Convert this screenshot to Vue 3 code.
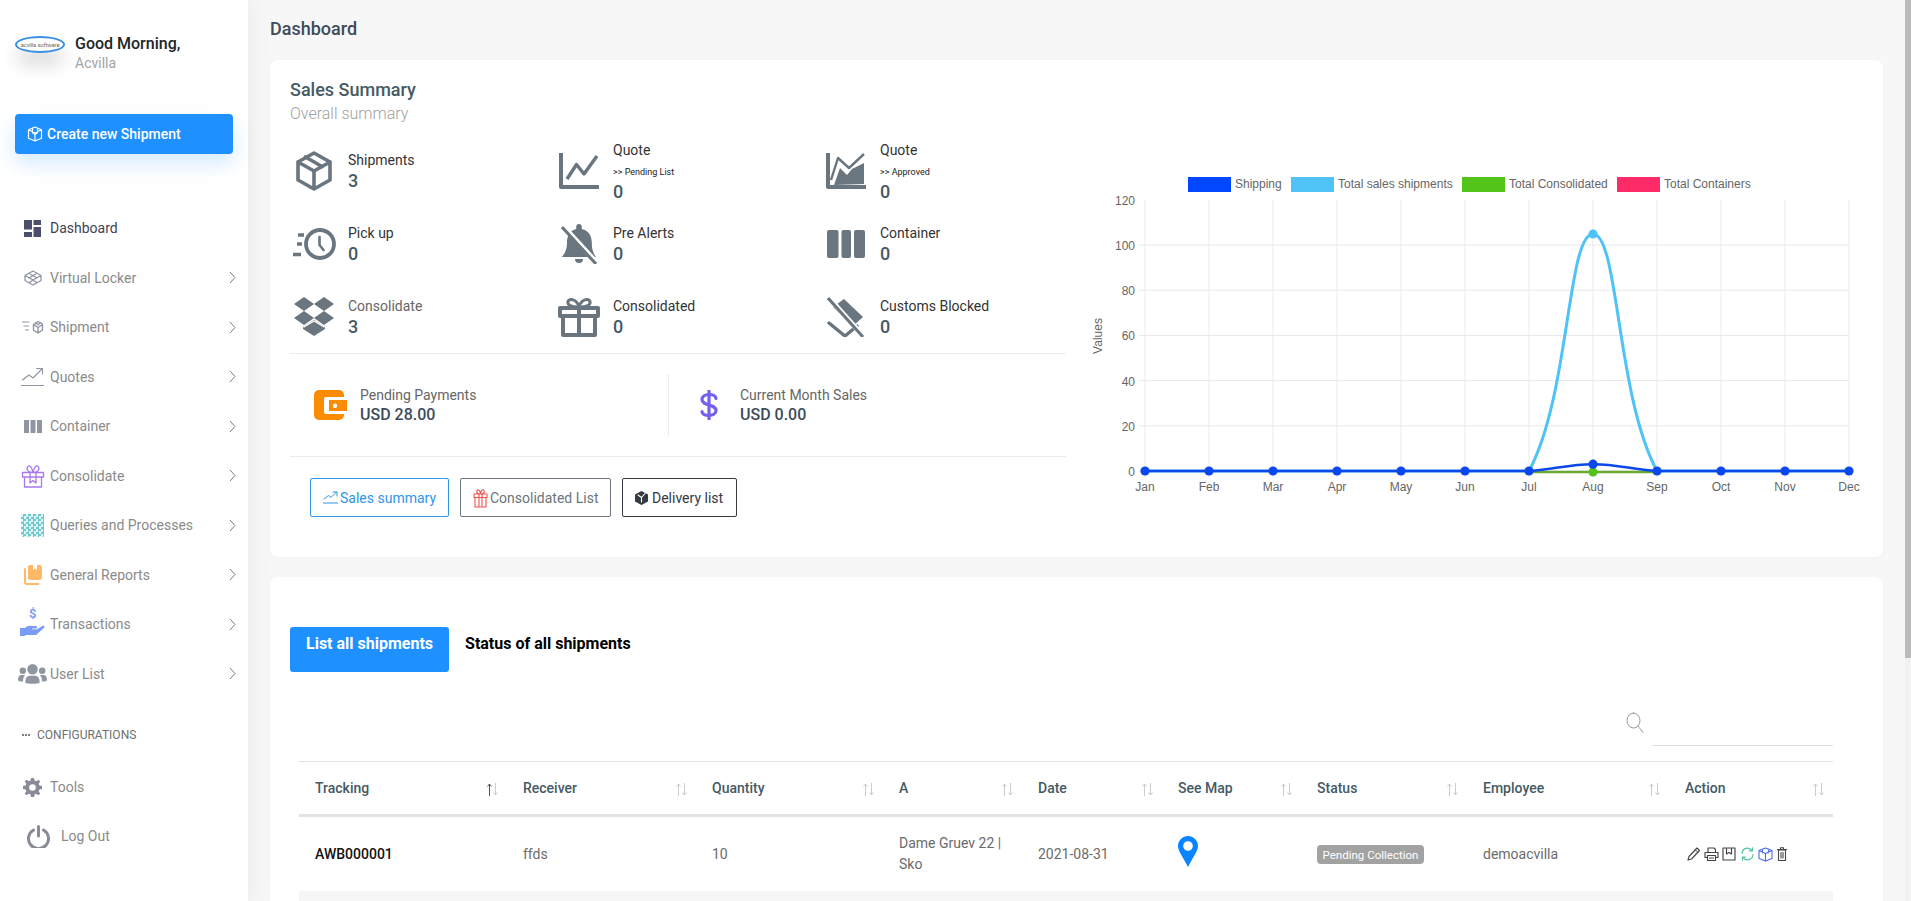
<script setup>
import { h } from 'vue'

const P = (d, m = 'f', w = 2, c = 'currentColor') =>
  m === 'f' ? { d, fill: c, stroke: 'none' }
            : { d, fill: 'none', stroke: c, 'stroke-width': w, 'stroke-linecap': m === 'b' ? 'butt' : 'round', 'stroke-linejoin': 'round' }

const ICONS = {
  /* sidebar */
  dash: [17, 17, [P('M0 0h8v9.5H0zM0 12h8v5H0zM9.5 0H17v5H9.5zM9.5 7H17v10H9.5z')]],
  locker: [18, 16, [P('M9 1 17 5.5V10.5L9 15 1 10.5V5.5ZM1 5.5 9 10 17 5.500M5 3.200 13 8M13 3.200 5 8M5 12.800 9 10 13 12.800', 's', 1.3)]],
  ship: [22, 14, [P('M12 4.500 16 1.500 20.500 4 20.500 10 16 13 11.500 10V4.500ZM11.500 4.500 16 7.500 20.500 4.500M16 7.500V13M13.500 2.800 16 4.800 18.500 2.800', 's', 1.4), P('M0 2h7M2 6h4.500M3.500 10h3', 's', 1.2)]],
  trend: [23, 20, [P('M1.500 13 8 8 12 11 21 2M15.500 1.500H21.500V7', 's', 1.1), P('M0 18.500H23', 's', 1)]],
  bars: [18, 13, [P('M0 0h5v13H0zM6.500 0h5v13h-5zM13 0h5v13h-5z')]],
  giftO: [24, 24, [P('M1.500 8.500H22.500V13H1.500ZM3.500 13V23H20.500V13M9 8.500V19L12 16.500 15 19V8.500M12 8.500C8 8.500 5 6 6.500 3 8 0.500 11 2.500 12 8.500 13 2.500 16 0.500 17.500 3 19 6 16 8.500 12 8.500Z', 's', 1.3)]],
  book: [18, 20, [P('M4 1.500a2.500 2.500 0 0 1 2.500-1.500H9v5l2-1.500L13 5V0h2.500A2.500 2.500 0 0 1 18 2.500v10a2.500 2.500 0 0 1-2.500 2.500H6.500A2.500 2.500 0 0 1 4 12.500Z'), P('M1 4v13a2 2 0 0 0 2 2h11.500', 's', 2)]],
  hand: [25, 23, [P('M0 15h5c2-2 4-2.500 7-2h4c1.500 0 1.500 2.500 0 2.500h-4v.8h5l5.500-3.300c1.500-.7 2.700.8 1.600 1.800L16 22H6l-1.500 1H0Z')]],
  users: [29, 20, [P('M14.500 0a5 5 0 1 1 0 10.500 5 5 0 0 1 0-10.500ZM4.800 3.500a3 3 0 1 1 0 6.500 3 3 0 0 1 0-6.500ZM24.200 3.500a3 3 0 1 1 0 6.500 3 3 0 0 1 0-6.500ZM7.500 19c-.500-3.500.800-7 4.200-7.200h5.600c3.400.2 4.700 3.700 4.200 7.200-2 1-12 1-14 0ZM0 16c0-3 1.200-5 3.500-5h2.700c.7 0 .8.500.2 1-1 1.200-1.200 2.500-1.300 5.500C2.500 17.500 0 17 0 16ZM29 16c0-3-1.200-5-3.500-5h-2.700c-.7 0-.8.500-.2 1 1 1.200 1.200 2.500 1.300 5.500 2.600 0 5.100-.5 5.100-1.500Z')]],
  gear: [19, 19, [P('M8 0h3l.5 2.600 1.700.7L15.400 1.800 17.200 3.600 15.700 5.800l.7 1.700L19 8v3l-2.600.5-.7 1.700 1.500 2.200-1.800 1.800-2.200-1.500-1.700.7L11 19H8l-.5-2.600-1.700-.7-2.200 1.500L1.800 15.400 3.300 13.200 2.600 11.500 0 11V8l2.600-.5.7-1.700L1.800 3.600 3.600 1.800 5.800 3.300l1.700-.7ZM9.500 6.200a3.300 3.300 0 1 0 0 6.600 3.300 3.300 0 0 0 0-6.600Z')]],
  power: [23, 23, [P('M6.500 5A10 10 0 1 0 16.500 5', 's', 3), P('M11.500 1.500V11', 's', 3)]],
  cube: [16, 16, [P('M8 1 14.500 3.800V12.200L8 15 1.500 12.200V3.800ZM1.500 3.800 8 6.800 14.500 3.800M5.500 2V6.800L8 8.500 10.500 6.800V2M8 8.500V15', 's', 1.2)]],
  /* stats */
  box: [36, 40, [P('M18 2 34 11V29L18 38 2 29V11ZM2 11 18 20 34 11M18 20V38', 's', 3.600), P('M9.500 6 26 15.500', 's', 3.600)]],
  line: [40, 36, [P('M2 0V34H40', 'b', 4), P('M8 26 17.500 11.500 25 21 38 3', 'b', 3.400)]],
  area: [40, 36, [P('M2 0V34H40', 'b', 4), P('M8 32 14 15 21 22 26 16 38 10V31Z'), P('M5 27 12 5 23 15 38 1', 'b', 2.400)]],
  clock: [43, 32, [P('M27 2a14 14 0 1 1 0 28 14 14 0 0 1 0-28', 's', 3.800), P('M26.500 9V17L30.500 22', 's', 2.600), P('M5 7H11M4 16H9M0 26.500H8', 'b', 3.600)]],
  bell: [36, 40, [P('M18 0c1.800 0 2.800 1.300 2.800 2.900V5c6.500 1.300 10 6.600 10 13.500 0 9 2.400 11.500 4.200 14.500H1c1.800-3 5-5.500 5-14.500C6 11.600 9.200 6.300 15.200 5V2.900C15.200 1.300 16.200 0 18 0ZM14 35h8a4 4 0 0 1-8 0Z'), P('M2 2 36 39', 'b', 5, '#fff'), P('M1 3 35 40', 'b', 3)]],
  cols: [38, 28, [P('M2 0h7.500a2 2 0 0 1 2 2v24a2 2 0 0 1-2 2H2a2 2 0 0 1-2-2V2a2 2 0 0 1 2-2ZM16.500 0H22a2 2 0 0 1 2 2v24a2 2 0 0 1-2 2h-5.500a2 2 0 0 1-2-2V2a2 2 0 0 1 2-2ZM29 0h7a2 2 0 0 1 2 2v24a2 2 0 0 1-2 2h-7a2 2 0 0 1-2-2V2a2 2 0 0 1 2-2Z')]],
  drop: [42, 39, [P('M11 0 21 7 11 14 1 7ZM31 0 41 7 31 14 21 7ZM11 14 21 21 11 28 1 21ZM31 14 41 21 31 28 21 21ZM10 30 21 23 32 30V32L21 39 10 32Z'), P('M11 30 21 24 31 30', 's', 1.200, '#fff')]],
  gift: [44, 40, [P('M3 11H41V19H3ZM6 19V38H38V19M22 11V38', 's', 4), P('M22 10C14 10 10 8 11 4.500 12 1 20 2 22 10 24 2 32 1 33 4.500 34 8 30 10 22 10Z', 's', 3)]],
  block: [38, 40, [P('M17 2 36 20 26 29 6 10Z'), P('M2 26 18 39 30 29', 's', 3.400), P('M2 1 38 41', 'b', 5, '#fff'), P('M1 1 36 40', 'b', 3)]],
  wallet: [33, 30, [P('M5 0h20a5 5 0 0 1 5 5v20a5 5 0 0 1-5 5H5a5 5 0 0 1-5-5V5a5 5 0 0 1 5-5Z'), P('M12 7H33V24H12a2 2 0 0 1-2-2V9a2 2 0 0 1 2-2Z', 'f', 0, '#fff'), P('M15 10H33V21H15Z'), P('M21 13.500a2.200 2.200 0 1 1 0 4.400 2.200 2.200 0 0 1 0-4.400Z', 'f', 0, '#fff')]],
  dollar: [18, 30, [P('M9 1V29', 's', 3.200), P('M16 8.500C16 3 2 3 2 9.500 2 16 16 14 16 20.500 16 27 2 27 2 21.500', 's', 3.200)]],
  /* small */
  sTrend: [15, 13, [P('M1 8 5.500 4.500 8 6.500 13.500 1M10 1H14V5', 's', 1), P('M0 12H15', 's', 1)]],
  sGift: [15, 20, [P('M1 6H14V9.500H1ZM2 9.500V19H13V9.500M6 6V19M9 6V19M7.500 6C4.500 6 3 4.500 4 2.500 5 1 7 2 7.500 6 8 2 10 1 11 2.500 12 4.500 10.500 6 7.500 6Z', 's', 1.100)]],
  sBox: [13, 14, [P('M6.500 0 13 3.500V10.500L6.500 14 0 10.500V3.500Z'), P('M3 4 6.500 6.500 10 2.500M6.500 6.500V11', 's', 1.100, '#fff')]],
  pencil: [13, 14, [P('M10 1 12.500 3.500 4.500 12 1 13 2 9.500Z', 's', 1.100), P('M8.500 3 11 5.500', 's', 1)]],
  printer: [15, 14, [P('M4 5V1H10L11.500 2.500V5M1 5.500H14V10.500H11.500M3.500 10.500H1V5.500M3.500 8.500H11.500V13.500H3.500ZM5.500 11H9.500', 's', 1.150)]],
  save: [14, 14, [P('M1 1H13V13H1ZM4.500 1V7L7 5.500 9.500 7V1', 's', 1.150)]],
  sync: [15, 14, [P('M2 6.500A5.500 5.500 0 0 1 12 3.500M13 7.500A5.500 5.500 0 0 1 3 10.500M12.500 .8V3.800H9.500M2.500 13.200V10.200H5.500', 's', 1.200)]],
  bluebox: [15, 15, [P('M7.500 1 14 3.500V11.500L7.500 14 1 11.500V3.500ZM1 3.500 7.500 6.500 14 3.500M7.500 6.500V14M4.500 2V6M10.500 2V6', 's', 1.100)]],
  trash: [10, 14, [P('M1.500 3H8.500V13.500H1.500ZM0 2.500H10M3.500 2.500V.7H6.500V2.500', 's', 1.100), P('M4 5.500V11M6 5.500V11', 's', 1.100)]],
  search: [18, 21, [P('M7.500 1a6.500 7.500 0 1 1 0 15 6.500 7.500 0 0 1 0-15ZM12 14 17 20.500', 's', 1)]],
  pin: [20, 31, [P('M10 0C4.500 0 0 4.500 0 10c0 5 5 11 10 21 5-10 10-16 10-21C20 4.500 15.500 0 10 0Zm0 5.200a4.800 4.800 0 1 1 0 9.600 4.800 4.800 0 0 1 0-9.600Z')]]
}

const Ico = (props) => {
  const [w, h2, paths] = ICONS[props.n]
  return h('svg', { width: w, height: h2, viewBox: `0 0 ${w} ${h2}` }, paths.map((p) => h('path', p)))
}
Ico.props = ['n']

const menu = [
  { label: 'Dashboard', icon: 'dash', tone: 'm-dash', active: true },
  { label: 'Virtual Locker', icon: 'locker', tone: 'm-gray', arrow: true },
  { label: 'Shipment', icon: 'ship', tone: 'm-gray', arrow: true },
  { label: 'Quotes', icon: 'trend', tone: 'm-gray', arrow: true },
  { label: 'Container', icon: 'bars', tone: 'm-gray', arrow: true },
  { label: 'Consolidate', icon: 'giftO', tone: 'm-purple', arrow: true },
  { label: 'Queries and Processes', icon: null, tone: 'm-gray', arrow: true },
  { label: 'General Reports', icon: 'book', tone: 'm-orange', arrow: true },
  { label: 'Transactions', icon: 'hand', tone: 'm-blue', arrow: true, dollar: true },
  { label: 'User List', icon: 'users', tone: 'm-gray', arrow: true }
]

const stats = [
  { label: 'Shipments', value: 3, icon: 'box' },
  { label: 'Quote', sub: '>> Pending List', value: 0, icon: 'line' },
  { label: 'Quote', sub: '>> Approved', value: 0, icon: 'area' },
  { label: 'Pick up', value: 0, icon: 'clock' },
  { label: 'Pre Alerts', value: 0, icon: 'bell' },
  { label: 'Container', value: 0, icon: 'cols' },
  { label: 'Consolidate', value: 3, icon: 'drop', soft: true },
  { label: 'Consolidated', value: 0, icon: 'gift' },
  { label: 'Customs Blocked', value: 0, icon: 'block' }
]

const cols = [
  { t: 'Tracking', on: true }, { t: 'Receiver' }, { t: 'Quantity' }, { t: 'A' }, { t: 'Date' },
  { t: 'See Map' }, { t: 'Status' }, { t: 'Employee' }, { t: 'Action' }
]
const actions = [
  { n: 'pencil', c: 'a-dark' }, { n: 'printer', c: 'a-dark' }, { n: 'save', c: 'a-dark' },
  { n: 'sync', c: 'a-green' }, { n: 'bluebox', c: 'a-blue' }, { n: 'trash', c: 'a-dark' }
]

const months = ['Jan', 'Feb', 'Mar', 'Apr', 'May', 'Jun', 'Jul', 'Aug', 'Sep', 'Oct', 'Nov', 'Dec']
const X0 = 1145, DX = 64, Y0 = 471, DY = 2.26
const px = (i) => X0 + i * DX
const py = (v) => Y0 - v * DY
const ticks = [0, 20, 40, 60, 80, 100, 120]
const monthPts = months.map((m, i) => ({ m, x: px(i) }))
const legend = [
  { t: 'Shipping', x: 1188, c: '#0047ff' },
  { t: 'Total sales shipments', x: 1291, c: '#4fc3f7' },
  { t: 'Total Consolidated', x: 1462, c: '#52c41a' },
  { t: 'Total Containers', x: 1617, c: '#ff2a68' }
]
const lightPath = `M${X0} ${Y0}H1529C1569.600 396 1567.400 234 1593 234C1618.600 234 1616.400 396 1657 ${Y0}H${px(11)}`
const darkPath = `M${X0} ${Y0}H1529C1554.600 469.600 1567.400 464.200 1593 464.200C1618.600 464.200 1631.400 469.600 1657 ${Y0}H${px(11)}`
</script>

<template>
  <div class="app">
    <aside class="side">
      <div class="user">
        <div class="logo"><span class="logo-txt">acvilla software</span></div>
        <div>
          <div class="hello">Good Morning,</div>
          <div class="uname">Acvilla</div>
        </div>
      </div>
      <button class="create"><Ico n="cube" />Create new Shipment</button>

      <nav class="nav">
        <a v-for="m in menu" :key="m.label" class="item" :class="{ active: m.active }">
          <span class="slot" :class="m.tone">
            <span v-if="!m.icon" class="checker"></span>
            <Ico v-else :n="m.icon" />
            <span v-if="m.dollar" class="hand-dollar">$</span>
          </span>
          <span class="label">{{ m.label }}</span>
          <svg v-if="m.arrow" class="chev" width="7" height="13" viewBox="0 0 7 13">
            <path d="M1 1l5 5.500-5 5.500" fill="none" stroke="#7a7a7a" stroke-width="1" />
          </svg>
        </a>
      </nav>

      <div class="cfg"><span class="dots"><i></i><i></i><i></i></span>CONFIGURATIONS</div>
      <a class="item tools"><span class="slot m-tool"><Ico n="gear" /></span><span class="label">Tools</span></a>
      <a class="item logout"><span class="slot m-tool"><Ico n="power" /></span><span class="label">Log Out</span></a>
    </aside>

    <main class="main">
      <h1 class="page">Dashboard</h1>

      <section class="card summary">
        <div class="sum-left">
          <h2 class="title">Sales Summary</h2>
          <div class="subtitle">Overall summary</div>

          <div class="stats">
            <div v-for="s in stats" :key="s.label + s.icon" class="stat">
              <span class="stat-ico"><Ico :n="s.icon" /></span>
              <div>
                <div class="stat-label" :class="{ soft: s.soft }">{{ s.label }}</div>
                <div v-if="s.sub" class="stat-sub">{{ s.sub }}</div>
                <div class="stat-val">{{ s.value }}</div>
              </div>
            </div>
          </div>

          <div class="pays">
            <div class="pay pay-a">
              <span class="wallet"><Ico n="wallet" /></span>
              <div><div class="pay-label">Pending Payments</div><div class="pay-val">USD 28.00</div></div>
            </div>
            <div class="pay pay-b">
              <span class="dollar"><Ico n="dollar" /></span>
              <div><div class="pay-label">Current Month Sales</div><div class="pay-val">USD 0.00</div></div>
            </div>
          </div>

          <div class="btns">
            <button class="btn b-blue"><Ico n="sTrend" />Sales summary</button>
            <button class="btn b-gray"><span class="red"><Ico n="sGift" /></span>Consolidated List</button>
            <button class="btn b-dark"><Ico n="sBox" />Delivery list</button>
          </div>
        </div>

        <svg class="chart" width="790" height="330" viewBox="1080 165 790 330">
          <g v-for="l in legend" :key="l.t">
            <rect :x="l.x" y="177" width="43" height="15" :fill="l.c" />
            <text :x="l.x + 47" y="188" class="ctext">{{ l.t }}</text>
          </g>
          <line v-for="m in monthPts" :key="'v' + m.m" :x1="m.x" :x2="m.x" y1="200" y2="478" stroke="#ebebeb" />
          <g v-for="t in ticks" :key="t">
            <line v-if="t < 120" :x1="X0 - 6" :x2="1849" :y1="py(t)" :y2="py(t)" stroke="#e8e8e8" />
            <text x="1135" :y="py(t) + 5" text-anchor="end" class="ctext">{{ t }}</text>
          </g>
          <text v-for="m in monthPts" :key="'l' + m.m" :x="m.x" y="491" text-anchor="middle" class="ctext">{{ m.m }}</text>
          <text transform="translate(1102 336) rotate(-90)" text-anchor="middle" class="ctext">Values</text>

          <path :d="lightPath" fill="none" stroke="#4fc3f7" stroke-width="3" />
          <path d="M1529 472H1657" fill="none" stroke="#6aa832" stroke-width="2.500" />
          <path :d="darkPath" fill="none" stroke="#0a48ea" stroke-width="2.500" />
          <circle cx="1593" cy="234" r="4.500" fill="#4fc3f7" />
          <circle cx="1593" cy="472" r="4.500" fill="#52c41a" />
          <circle v-for="(m, i) in monthPts" :key="'d' + m.m" :cx="m.x" :cy="i === 7 ? 464.2 : Y0" r="4.600" fill="#0a48ea" />
        </svg>
      </section>

      <section class="card list">
        <div class="tabs">
          <button class="tab on">List all shipments</button>
          <button class="tab">Status of all shipments</button>
        </div>

        <div class="search">
          <span class="s-ico"><Ico n="search" /></span>
          <div class="s-line"></div>
        </div>

        <div class="tbl">
          <div class="row head">
            <div v-for="c in cols" :key="c.t" class="cell hcell">
              {{ c.t }}
              <svg class="sort" width="13" height="13" viewBox="0 0 13 13" fill="none">
                <path d="M3.500 13V1M1.500 3.500 3.500 1l2 2.500" :stroke="c.on ? '#555' : '#ccc'" />
                <path d="M9.500 0V12M7.500 9.500l2 2.500 2-2.500" stroke="#ccc" />
              </svg>
            </div>
          </div>
          <div class="row body">
            <div class="cell strong">AWB000001</div>
            <div class="cell">ffds</div>
            <div class="cell">10</div>
            <div class="cell">Dame Gruev 22 |<br />Sko</div>
            <div class="cell">2021-08-31</div>
            <div class="cell pin"><Ico n="pin" /></div>
            <div class="cell"><span class="badge">Pending Collection</span></div>
            <div class="cell">demoacvilla</div>
            <div class="cell acts">
              <span v-for="a in actions" :key="a.n" class="act" :class="a.c"><Ico :n="a.n" /></span>
            </div>
          </div>
          <div class="row stripe"></div>
        </div>
      </section>
    </main>

    <div class="scroll"><div class="thumb"></div></div>
  </div>
</template>

<style>
html, body { margin: 0; overflow: hidden; }
</style>

<style scoped>
* { box-sizing: border-box; }
.app {
  display: flex;
  width: 1911px;
  height: 901px;
  overflow: hidden;
  font-family: Roboto, "Liberation Sans", sans-serif;
  font-size: 14px;
  background: #f7f7f7;
}

/* sidebar */
.side {
  flex: 0 0 248px;
  background: #fff;
  padding-top: 36px;
  box-shadow: 0 0 24px rgba(0, 0, 0, .07);
  position: relative;
}
.user { display: flex; gap: 10px; padding-left: 15px; height: 78px; }
.logo {
  width: 50px; height: 17px;
  border: 2px solid #3a90e4;
  border-radius: 50%;
  box-shadow: 0 12px 18px rgba(0, 0, 0, .16);
  display: flex; align-items: center; justify-content: center;
  overflow: hidden;
  background: #fff;
}
.logo-txt { font-size: 6px; letter-spacing: -.2px; color: #77705f; white-space: nowrap; }
.hello { font-size: 16px; font-weight: 500; color: #212529; line-height: 16px; }
.uname { font-size: 14px; color: #a3a3a3; line-height: 16px; margin-top: 3px; }
.create {
  display: flex; align-items: center; gap: 4px;
  width: 218px; height: 40px;
  margin-left: 15px;
  padding: 0 0 0 12px;
  background: #1e90ff;
  color: #fff;
  border: 0; border-radius: 4px;
  font: 500 14px Roboto, sans-serif;
  box-shadow: 0 10px 20px rgba(30, 144, 255, .18);
}
.nav { margin-top: 49.600px; }
.item { display: flex; align-items: center; height: 49.500px; color: #8a8a8a; position: relative; }
.item.active { color: #3f4254; }
.slot { flex: 0 0 33px; margin-left: 16px; margin-right: 1px; display: flex; justify-content: center; align-items: center; position: relative; }
.label { flex: 1; }
.chev { margin-right: 12px; }
.m-dash { color: #4b4f6b; }
.m-gray { color: #9095a2; }
.m-purple { color: #a878f0; }
.m-orange { color: #ffb866; }
.m-blue { color: #7b9cf7; }
.m-tool { color: #888b96; }
.checker {
  width: 23px; height: 23px;
  background: repeating-conic-gradient(#6fc9cd 0 25%, #dff3f4 0 50%) 0 0 / 5px 5px;
}
.hand-dollar {
  position: absolute; left: 13px; top: -7px;
  font: 700 13px Roboto, sans-serif; color: #7b9cf7;
}
.cfg { margin-top: 24px; padding-left: 22px; height: 25px; display: flex; align-items: center; font-size: 12px; color: #6f6f6f; }
.dots { flex: 0 0 15px; display: flex; gap: 1px; }
.dots i { width: 2px; height: 2px; border-radius: 50%; background: #555; }
.tools { margin-top: 15px; height: 49px; }
.logout { height: 49px; }
.logout .slot { flex-basis: 34px; margin-left: 21px; margin-right: 6px; }

/* main */
.main { flex: 1; min-width: 0; padding: 0 22px; }
.page { margin: 0; height: 60px; line-height: 58px; font-size: 18px; font-weight: 500; color: #3e4b5b; }
.card {
  background: #fff;
  border-radius: 8px;
  box-shadow: 0 1px 6px rgba(0, 0, 0, .025);
}
.summary { display: flex; height: 497px; padding: 19px 0 0 20px; }
.sum-left { flex: 0 0 776px; }
.title { margin: 0; font-size: 18px; line-height: 22px; font-weight: 500; color: #455a64; }
.subtitle { margin-top: 2px; font-size: 16px; line-height: 22px; font-weight: 300; color: #a1a1a1; }
.stats {
  display: grid;
  grid-template-columns: 265px 267px 1fr;
  grid-auto-rows: 73px;
  margin-top: 9px;
  border-bottom: 1px solid #ebebeb;
  height: 220px;
}
.stat { display: flex; align-items: center; }
.stat-ico { flex: 0 0 58px; padding-right: 10px; display: flex; justify-content: center; color: #69757f; }
.stat-label { color: #333; line-height: 20px; }
.stat-label.soft { color: #666; }
.stat-sub { font-size: 9px; color: #222; line-height: 12px; margin-top: 6px; margin-bottom: 3px; }
.stat-val { font-size: 18px; font-weight: 500; color: #455a64; line-height: 21px; }
.pays { display: flex; height: 103px; align-items: center; border-bottom: 1px solid #ebebeb; }
.pay { display: flex; align-items: center; height: 62px; }
.pay-a { flex: 0 0 379px; padding-left: 24px; border-right: 1px solid #ebebeb; gap: 13px; }
.pay-b { padding-left: 31px; gap: 22px; }
.wallet { display: flex; color: #fb8c00; }
.dollar { display: flex; color: #7460ee; }
.pay-label { color: #666; line-height: 20px; }
.pay-val { font-size: 16px; font-weight: 500; color: #3e4b5b; line-height: 20px; }
.btns { display: flex; gap: 11px; padding: 21px 0 0 20px; }
.btn {
  display: flex; align-items: center; gap: 2px;
  height: 39px;
  padding: 0 0 0 12px;
  background: #fff;
  border: 1px solid;
  border-radius: 2px;
  font: 400 14px Roboto, sans-serif;
  white-space: nowrap;
}
.b-blue { width: 139px; color: #2f96e8; border-color: #2f96e8; }
.b-gray { width: 151px; color: #6c757d; border-color: #6c757d; }
.b-dark { width: 115px; gap: 4px; color: #343a40; border-color: #343a40; }
.red { display: flex; color: #ef5350; }
.chart { margin: 86px 0 0 14px; flex: none; }
.ctext { font: 12px "Liberation Sans", Arial, sans-serif; fill: #666; }

/* list */
.list { margin-top: 20px; padding: 50px 50px 0 20px; height: 340px; }
.tabs { display: flex; }
.tab {
  height: 45px;
  padding: 8px 16px 19px;
  background: none;
  border: 0; border-radius: 3px;
  font: 700 16px/18px Roboto, sans-serif;
  color: #000;
  display: block;
  text-align: left;
  align-self: flex-start;
}
.tab.on { background: #1e90ff; color: #fff; }
.search { display: flex; justify-content: flex-end; align-items: center; margin-top: 33px; height: 41px; }
.s-ico { display: flex; color: #999; margin-right: 8px; margin-top: -7px; }
.s-line { width: 181px; height: 41px; border-bottom: 1px solid #ddd; }
.tbl { margin: 15px 0 0 9px; }
.row { display: grid; grid-template-columns: 208px 189px 187px 139px 140px 139px 166px 202px 164px; }
.head { height: 56px; border-top: 1px solid #e2e2e2; border-bottom: 3px solid #e2e2e2; }
.cell { padding-left: 16px; display: block; align-self: center; color: #6b6b6b; line-height: 21px; position: relative; }
.hcell { font-weight: 500; color: #455a64; }
.sort { position: absolute; right: 8px; top: 5px; }
.body { height: 74px; }
.strong { font-weight: 500; color: #111; }
.pin { color: #0a84ff; display: flex; margin-top: -6px; }
.badge {
  display: inline-block;
  width: 107px; height: 19px;
  line-height: 20px;
  text-align: center;
  border-radius: 4px;
  background: #a2a2a2;
  color: #fff;
  font-size: 11.500px;
}
.acts { display: flex; align-items: center; gap: 3.500px; padding-left: 18px; }
.act { display: flex; }
.a-dark { color: #444; }
.a-green { color: #50c4a0; }
.a-blue { color: #4f6ae8; }
.stripe { height: 30px; background: #f6f6f6; display: block; }

/* scrollbar */
.scroll { flex: 0 0 6px; background: #f1f1f1; }
.thumb { height: 658px; background: #bbb; }
</style>
